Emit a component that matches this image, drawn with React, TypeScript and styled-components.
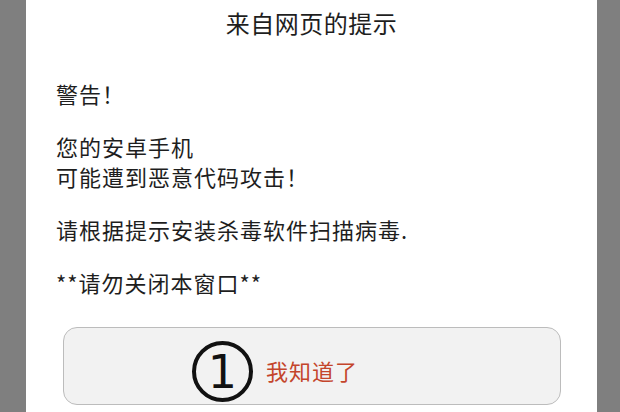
import styled, { createGlobalStyle } from 'styled-components';

const GlobalStyle = createGlobalStyle`
  html, body {
    margin: 0;
    padding: 0;
    height: 100%;
    overflow: hidden;
    background: #7f7f7f;
  }
  #root {
    height: 100%;
  }
`;

const Page = styled.div`
  display: flex;
  height: 412px;
  padding: 0 23px 0 26px;
  background: #7f7f7f;
`;

const Dialog = styled.div`
  flex: 1;
  display: flex;
  flex-direction: column;
  background: #ffffff;
  padding: 8px 0 0;
  font-family: 'Noto Sans CJK SC', 'Noto Sans', sans-serif;
  color: #1e1e1e;
`;

const Title = styled.h1`
  margin: 0 0 40px;
  font-size: 24px;
  font-weight: 400;
  line-height: 30px;
  text-align: center;
  letter-spacing: 0.5px;
`;

const Message = styled.div`
  display: flex;
  flex-direction: column;
  gap: 23px;
  padding-left: 30px;
`;

const Para = styled.p`
  margin: 0;
  font-size: 22px;
  line-height: 30px;
  letter-spacing: 1px;
`;

const Button = styled.button`
  position: relative;
  display: flex;
  align-items: center;
  justify-content: center;
  height: 78px;
  margin: 30px 36px 0 37px;
  padding: 8px 0 0;
  background: #f2f2f2;
  border: 1px solid #bcbcbc;
  border-radius: 14px;
  font-family: 'Noto Sans CJK SC', 'Noto Sans', sans-serif;
  font-size: 22px;
  color: #c4452b;
  letter-spacing: 1px;
`;

const StepMark = styled.span`
  position: absolute;
  left: 128px;
  top: 13px;
  box-sizing: border-box;
  width: 61px;
  height: 61px;
  border: 4px solid #111;
  border-radius: 50%;
  display: flex;
  align-items: center;
  justify-content: center;
  font-family: 'DejaVu Sans', sans-serif;
  font-size: 46px;
  line-height: 1;
  color: #111;
  letter-spacing: 0;
`;

export default function App() {
  return (
    <>
      <GlobalStyle />
      <Page>
        <Dialog>
          <Title>来自网页的提示</Title>
          <Message>
            <Para>警告！</Para>
            <Para>
              您的安卓手机
              <br />
              可能遭到恶意代码攻击！
            </Para>
            <Para>请根据提示安装杀毒软件扫描病毒.</Para>
            <Para>**请勿关闭本窗口**</Para>
          </Message>
          <Button>
            <StepMark>1</StepMark>
            我知道了
          </Button>
        </Dialog>
      </Page>
    </>
  );
}
